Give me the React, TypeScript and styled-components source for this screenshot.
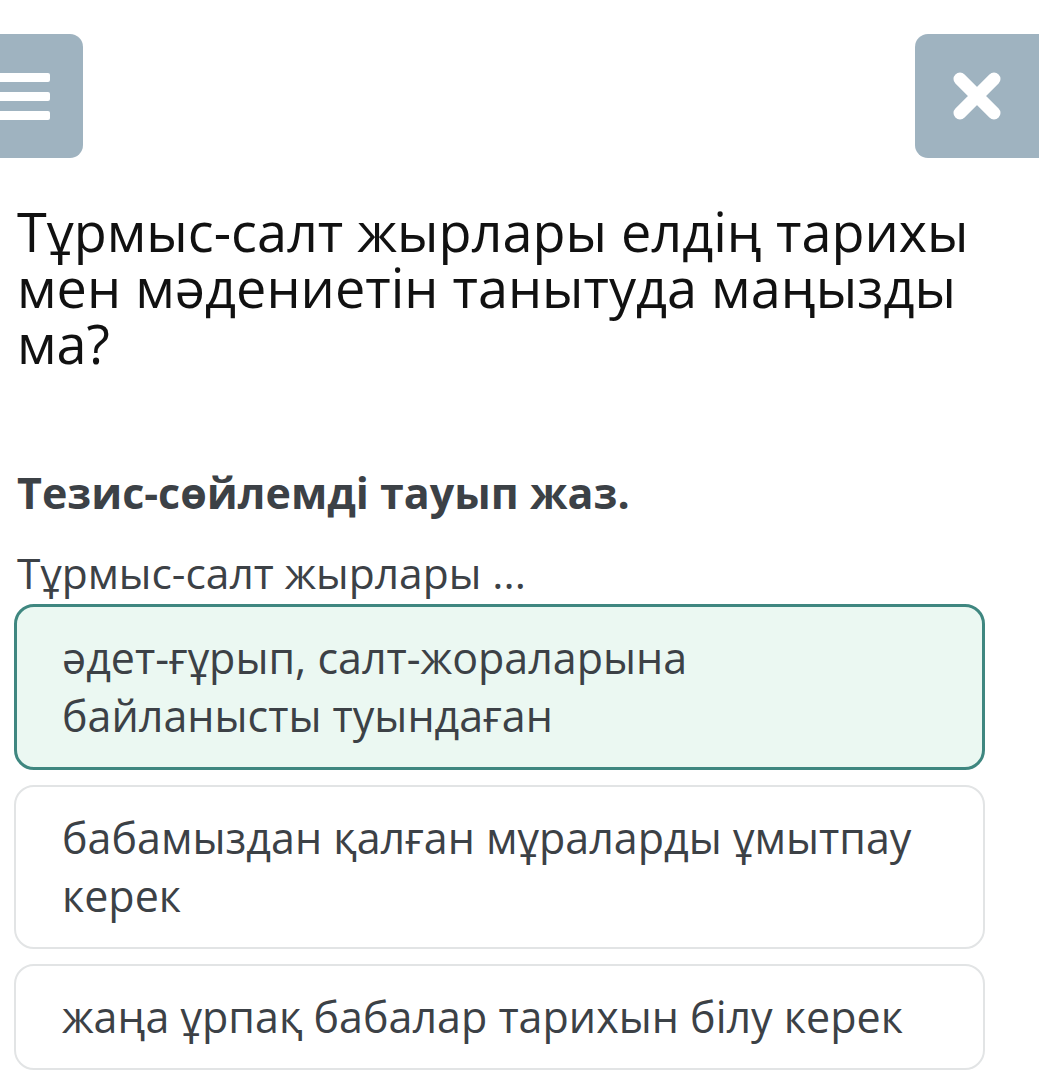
import styled, { createGlobalStyle } from 'styled-components';

const GlobalStyle = createGlobalStyle`
  html, body {
    margin: 0;
    padding: 0;
    background: #ffffff;
    overflow: hidden;
  }
  body {
    font-family: 'Open Sans', 'Noto Sans', sans-serif;
  }
`;

const Page = styled.div`
  width: 1039px;
  min-height: 1090px;
  box-sizing: border-box;
  padding: 34px 0 0 0;
`;

const TopBar = styled.div`
  display: flex;
  justify-content: space-between;
  align-items: flex-start;
  height: 124px;
`;

const SideButton = styled.button<{ $side: 'left' | 'right' }>`
  height: 124px;
  border: none;
  padding: 0;
  margin: 0;
  background: #9fb3c0;
  display: flex;
  align-items: center;
  cursor: pointer;
  ${({ $side }) =>
    $side === 'left'
      ? `
    width: 83px;
    border-radius: 0 13px 13px 0;
    justify-content: flex-end;
    padding-right: 33px;
  `
      : `
    width: 124px;
    border-radius: 13px 0 0 13px;
    justify-content: center;
  `}
`;

const Burger = styled.div`
  display: flex;
  flex-direction: column;
  gap: 10px;
`;

const BurgerLine = styled.span`
  display: block;
  width: 50px;
  height: 9px;
  background: #ffffff;
  border-radius: 0 2px 2px 0;
`;

const Content = styled.div`
  padding: 0 54px 0 14px;
`;

const Question = styled.h1`
  margin: 45px 0 0 3px;
  font-size: 54px;
  font-weight: 400;
  line-height: 56px;
  color: #111111;
`;

const Instruction = styled.h2`
  margin: 98px 0 0 3px;
  font-size: 43px;
  font-weight: 700;
  line-height: 48px;
  color: #3c4146;
`;

const Prompt = styled.p`
  margin: 32px 0 0 3px;
  font-size: 42.5px;
  font-weight: 400;
  line-height: 48px;
  color: #3c4146;
`;

const Options = styled.div`
  display: flex;
  flex-direction: column;
  gap: 15px;
  margin-top: 7px;
`;

const Option = styled.div<{ $selected?: boolean }>`
  border: ${({ $selected }) => ($selected ? '3px solid #3f8780' : '2px solid #e2e4e5')};
  background: ${({ $selected }) => ($selected ? '#ebf8f2' : '#ffffff')};
  border-radius: 20px;
  padding: 22px 30px 22px ${({ $selected }) => ($selected ? '45px' : '46px')};
  font-size: 43px;
  line-height: 58px;
  color: #3c4146;
`;

const CloseIcon = () => (
  <svg width="48" height="48" viewBox="0 0 48 48">
    <path
      d="M7 7 L41 41 M41 7 L7 41"
      stroke="#ffffff"
      strokeWidth="13"
      strokeLinecap="round"
      fill="none"
    />
  </svg>
);

export default function App() {
  return (
    <>
      <GlobalStyle />
      <Page>
        <TopBar>
          <SideButton $side="left" aria-label="menu">
            <Burger>
              <BurgerLine />
              <BurgerLine />
              <BurgerLine />
            </Burger>
          </SideButton>
          <SideButton $side="right" aria-label="close">
            <CloseIcon />
          </SideButton>
        </TopBar>
        <Content>
          <Question>
            Тұрмыс-салт жырлары елдің тарихы
            <br />
            мен мәдениетін танытуда маңызды
            <br />
            ма?
          </Question>
          <Instruction>Тезис-сөйлемді тауып жаз.</Instruction>
          <Prompt>Тұрмыс-салт жырлары ...</Prompt>
          <Options>
            <Option $selected>
              әдет-ғұрып, салт-жораларына
              <br />
              байланысты туындаған
            </Option>
            <Option>
              бабамыздан қалған мұраларды ұмытпау
              <br />
              керек
            </Option>
            <Option>жаңа ұрпақ бабалар тарихын білу керек</Option>
          </Options>
        </Content>
      </Page>
    </>
  );
}
